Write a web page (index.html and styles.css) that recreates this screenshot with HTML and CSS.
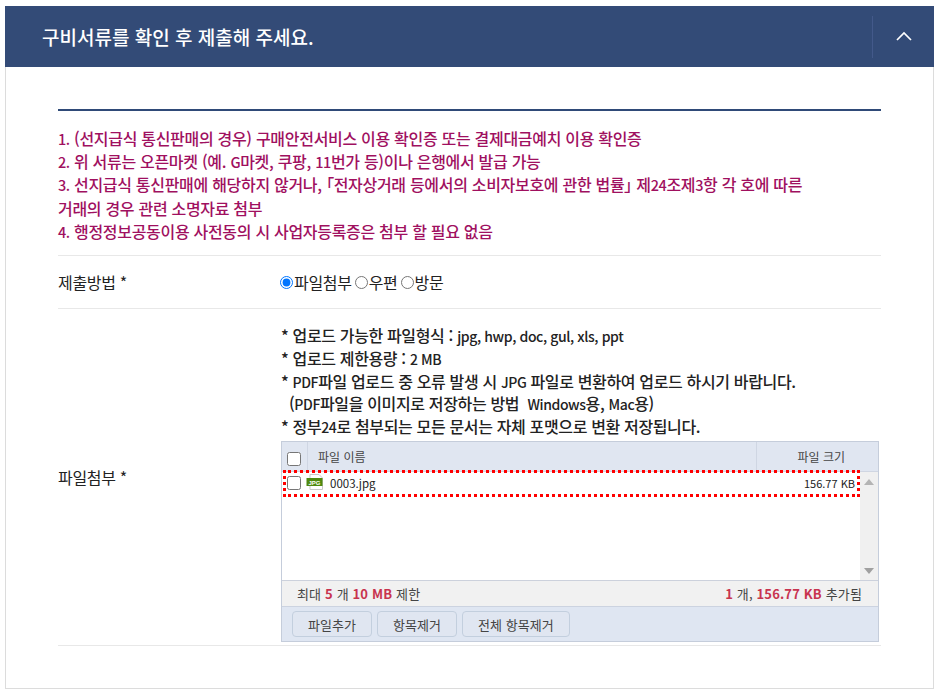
FILE: index.html
```html
<!DOCTYPE html>
<html lang="ko">
<head>
<meta charset="utf-8">
<title>구비서류</title>
<link rel="stylesheet" href="styles.css">
</head>
<body>
<section class="card">
  <header class="head">
    <h1>구비서류를 확인 후 제출해 주세요.</h1>
    <button class="toggle" type="button" aria-label="접기">
      <svg width="16" height="10" viewBox="0 0 16 10"><path d="M1 9l7-7 7 7" fill="none" stroke="#fff" stroke-width="1.7"/></svg>
    </button>
  </header>
  <div class="content">
    <ol class="notice">
      <li><span class="lat">1.</span> (선지급식 통신판매의 경우) 구매안전서비스 이용 확인증 또는 결제대금예치 이용 확인증</li>
      <li><span class="lat">2.</span> 위 서류는 오픈마켓 (예. <span class="lat">G</span>마켓, 쿠팡, <span class="lat">11</span>번가 등)이나 은행에서 발급 가능</li>
      <li><span class="lat">3.</span> 선지급식 통신판매에 해당하지 않거나, <span class="punct">「</span>전자상거래 등에서의 소비자보호에 관한 법률<span class="punct">」</span> 제<span class="lat">24</span>조제<span class="lat">3</span>항 각 호에 따른<br>거래의 경우 관련 소명자료 첨부</li>
      <li><span class="lat">4.</span> 행정정보공동이용 사전동의 시 사업자등록증은 첨부 할 필요 없음</li>
    </ol>
    <div class="row row-method">
      <div class="label">제출방법 *</div>
      <div class="radios">
        <label><input type="radio" name="m" checked>파일첨부</label>
        <label><input type="radio" name="m">우편</label>
        <label><input type="radio" name="m">방문</label>
      </div>
    </div>
    <div class="row row-file">
      <div class="label">파일첨부 *</div>
      <div class="value">
        <ul class="guide">
          <li>* 업로드 가능한 파일형식 : <span class="lat">jpg, hwp, doc, gul, xls, ppt</span></li>
          <li>* 업로드 제한용량 : <span class="lat">2 MB</span></li>
          <li>* <span class="lat">PDF</span>파일 업로드 중 오류 발생 시 <span class="lat">JPG</span> 파일로 변환하여 업로드 하시기 바랍니다.</li>
          <li class="indent">(<span class="lat">PDF</span>파일을 이미지로 저장하는 방법 &nbsp;<span class="lat">Windows</span>용, <span class="lat">Mac</span>용)</li>
          <li>* 정부<span class="lat">24</span>로 첨부되는 모든 문서는 자체 포맷으로 변환 저장됩니다.</li>
        </ul>
        <div class="uploader">
          <div class="up-head">
            <div class="h-check"><input type="checkbox"></div>
            <div class="h-name">파일 이름</div>
            <div class="h-size">파일 크기</div>
          </div>
          <div class="up-body">
            <div class="list">
              <div class="file">
                <input type="checkbox">
                <svg class="jpg" width="18" height="16" viewBox="0 0 18 16">
                  <path d="M4 .5h9l3.500 3.500v11.500H4z" fill="#fff" stroke="#c9c9c9"/>
                  <rect x="0.500" y="4" width="16" height="8" fill="#4f8a10"/>
                  <text x="8.500" y="10.800" class="jpg-text" text-anchor="middle">JPG</text>
                </svg>
                <span class="fname">0003.jpg</span>
                <span class="fsize">156.77 KB</span>
              </div>
            </div>
            <div class="scroll">
              <svg width="10" height="6" viewBox="0 0 10 6"><path d="M5 0l5 6H0z" fill="#b4b4b4"/></svg>
              <svg width="10" height="6" viewBox="0 0 10 6"><path d="M0 0h10L5 6z" fill="#a0a0a0"/></svg>
            </div>
          </div>
          <div class="up-status">
            <span>최대 <b>5</b> 개 <b>10 MB</b> 제한</span>
            <span><b>1</b> 개, <b>156.77 KB</b> 추가됨</span>
          </div>
          <div class="up-actions">
            <button type="button">파일추가</button>
            <button type="button">항목제거</button>
            <button type="button">전체 항목제거</button>
          </div>
        </div>
      </div>
    </div>
  </div>
</section>
</body>
</html>
```
FILE: styles.css
```css
* { box-sizing: border-box; }
html, body { margin: 0; padding: 0; background: #fff; }
body {
  padding: 6px 5px 8px;
  font-family: "Noto Sans CJK KR", "Noto Sans", sans-serif;
  color: #222;
}
ol, ul { list-style: none; margin: 0; padding: 0; }
.card {
  width: 929px;
  height: 683px;
  border: 1px solid #dcdcdc;
  border-top: 0;
}
.head {
  margin: 0 -1px;
  height: 61px;
  background: #334b77;
  display: flex;
  align-items: center;
  justify-content: space-between;
  padding-left: 37px;
}
.head h1 {
  margin: 0;
  color: #fff;
  font-size: 19px;
  font-weight: 500;
  line-height: 24px;
}
.toggle {
  width: 62px;
  height: 42px;
  background: none;
  border: 0;
  border-left: 1px solid #43598a;
  padding: 0;
}
.content { padding: 42px 52px 0; }
.notice {
  border-top: 2px solid #2f4a78;
  padding: 16px 0 12px;
  color: #a0105f;
  font-size: 16px;
  line-height: 23.200px;
  letter-spacing: -0.3px;
  font-weight: 500;
}
.lat { font-size: 14.500px; letter-spacing: -0.4px; line-height: 1; }
.punct { font-feature-settings: "palt"; }
.row {
  display: grid;
  grid-template-columns: 223px 1fr;
  align-items: center;
  border-top: 1px solid #e8e8e8;
  font-size: 16px;
  letter-spacing: -0.3px;
}
.row-method { height: 53px; }
.radios { display: flex; gap: 3px; margin-left: -1px; }
.radios label { display: flex; align-items: center; }
.radios input { margin: 0 1px 0 0; width: 13px; height: 13px; }
.row-file { border-bottom: 1px solid #e8e8e8; height: 338px; align-items: start; }
.row-file .label { align-self: center; }
.value { padding-top: 15px; }
.guide { line-height: 22.800px; font-weight: 500; letter-spacing: -0.35px; }
.guide .lat { font-size: 14px; }
.guide .indent { padding-left: 8px; }
.uploader {
  margin: 3px 0 0;
  width: 598px;
  height: 201px;
  border: 1px solid #c5cddb;
  display: flex;
  flex-direction: column;
  font-size: 12px;
  letter-spacing: 0;
  color: #444;
}
.up-head {
  flex: 0 0 30px;
  display: flex;
  background: #e0e6f1;
  border-bottom: 1px solid #d0d6e2;
  line-height: 29px;
}
.h-check { width: 26px; border-right: 1px solid #cfd6e3; display: flex; align-items: center; padding-left: 5px; }
.h-check input { margin: 4px 0 0; width: 14px; height: 14px; }
.h-name { flex: 1; padding-left: 10px; }
.h-size { width: 122px; border-left: 1px solid #cfd6e3; text-align: right; padding-right: 33px; }
.up-body { flex: 0 0 109px; display: flex; border-bottom: 1px solid #ccd1dc; }
.list { flex: 1; padding-left: 1px; margin-top: -2px; }
.file {
  height: 27px;
  border: 3px dotted #f00;
  display: flex;
  align-items: center;
  padding: 0 2px 2px 1px;
  color: #222;
}
.file input { margin: 0 5px 0 0; width: 14px; height: 14px; }
.jpg { flex: none; margin-top: -2px; }
.jpg-text { font: bold 6px "Liberation Sans", sans-serif; fill: #fff; }
.fname { margin-left: 6px; font-size: 11.500px; }
.fsize { margin-left: auto; font-size: 11px; }
.scroll {
  width: 18px;
  background: #f0f0f0;
  display: flex;
  flex-direction: column;
  justify-content: space-between;
  align-items: center;
  padding: 7px 0 6px;
}
.up-status {
  flex: 0 0 26px;
  background: #f1f1f1;
  border-bottom: 1px solid #ccd3e0;
  display: flex;
  justify-content: space-between;
  align-items: center;
  padding: 0 16px 0 15px;
  font-size: 13px;
  letter-spacing: 0.15px;
}
.up-status b { color: #c8344f; font-weight: 700; }
.up-actions {
  flex: 1;
  background: #dfe6f2;
  display: flex;
  gap: 5px;
  padding: 4px 10px;
}
.up-actions button {
  height: 26px;
  padding: 0 15px;
  border: 1px solid #c3cfde;
  border-radius: 4px;
  background: #e0e6f1;
  color: #444;
  font: 13px "Noto Sans CJK KR", sans-serif;
  letter-spacing: 0.05px;
}
```
